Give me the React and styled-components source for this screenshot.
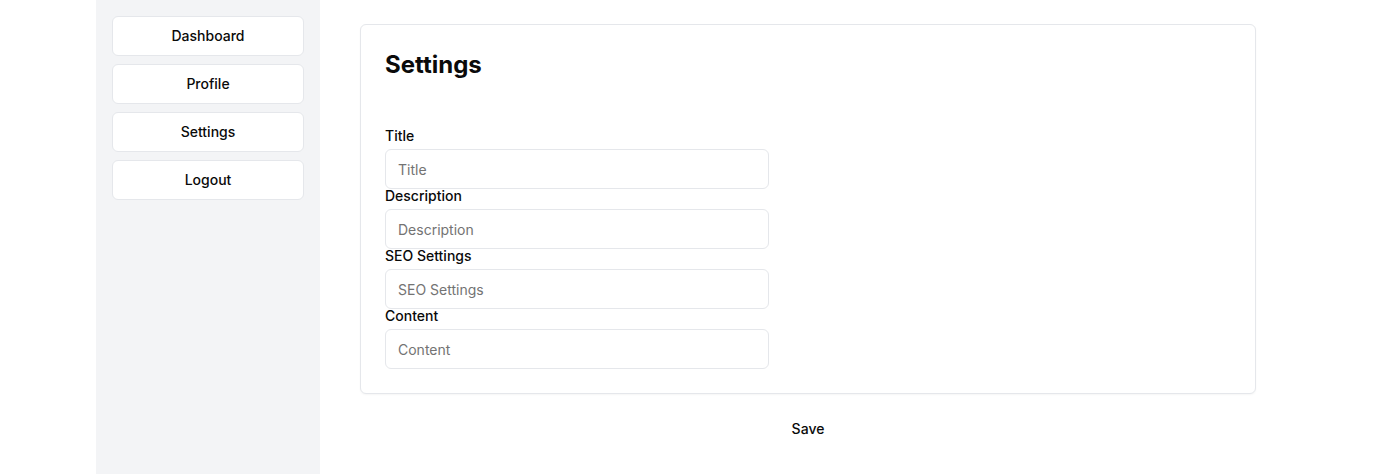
import React from "react";
import styled, { createGlobalStyle } from "styled-components";

const Global = createGlobalStyle`
  html, body { margin: 0; padding: 0; background: #ffffff; }
  body { font-family: Inter, "Noto Sans", sans-serif; color: #0a0a0a; }
  * { box-sizing: border-box; }
`;

const Layout = styled.div`
  display: flex;
  max-width: 1184px;
  margin: 0 auto;
  min-height: 474px;
`;

const Sidebar = styled.nav`
  width: 224px;
  flex-shrink: 0;
  background: #f3f4f6;
  padding: 16px;
  display: flex;
  flex-direction: column;
  gap: 8px;
`;

const NavButton = styled.button`
  height: 40px;
  width: 100%;
  background: #ffffff;
  border: 1px solid #e5e7eb;
  border-radius: 6px;
  padding: 0 0 1px;
  font-family: Inter, sans-serif;
  font-size: 14px;
  line-height: 20px;
  font-weight: 500;
  color: #0a0a0a;
  cursor: pointer;
`;

const Main = styled.main`
  flex: 1;
  padding: 24px 24px 24px 40px;
`;

const Column = styled.div`
  max-width: 896px;
  display: flex;
  flex-direction: column;
  align-items: center;
`;

const Card = styled.section`
  width: 100%;
  background: #fff;
  border: 1px solid #e5e7eb;
  border-radius: 6px;
  box-shadow: 0 1px 2px rgba(0, 0, 0, 0.04);
  padding: 24px;
`;

const Heading = styled.h2`
  margin: 0 0 44px;
  font-size: 24px;
  line-height: 32px;
  font-weight: 700;
`;

const Field = styled.div`
  height: 60px;
  display: flex;
  flex-direction: column;
  gap: 3px;
  padding-top: 1px;
  &:last-child { height: 64px; }
`;

const Label = styled.label`
  font-size: 14px;
  line-height: 20px;
  font-weight: 500;
`;

const Input = styled.input`
  width: 384px;
  height: 40px;
  flex-shrink: 0;
  border: 1px solid #e5e7eb;
  border-radius: 6px;
  padding: 0 12px;
  font-family: Inter, sans-serif;
  font-size: 14px;
  color: #0a0a0a;
  background: #fff;
  outline: none;
  &::placeholder { color: #737373; }
`;

const SaveButton = styled.button`
  margin-top: 15px;
  background: transparent;
  border: none;
  padding: 10px 16px;
  font-family: Inter, sans-serif;
  font-size: 14px;
  line-height: 20px;
  font-weight: 500;
  color: #0a0a0a;
  cursor: pointer;
`;

const navItems = ["Dashboard", "Profile", "Settings", "Logout"];
const fields = ["Title", "Description", "SEO Settings", "Content"];

export default function App() {
  return (
    <>
      <Global />
      <Layout>
        <Sidebar>
          {navItems.map((n) => (
            <NavButton key={n}>{n}</NavButton>
          ))}
        </Sidebar>
        <Main>
          <Column>
            <Card>
              <Heading>Settings</Heading>
              {fields.map((f) => (
                <Field key={f}>
                  <Label>{f}</Label>
                  <Input placeholder={f} />
                </Field>
              ))}
            </Card>
            <SaveButton>Save</SaveButton>
          </Column>
        </Main>
      </Layout>
    </>
  );
}
